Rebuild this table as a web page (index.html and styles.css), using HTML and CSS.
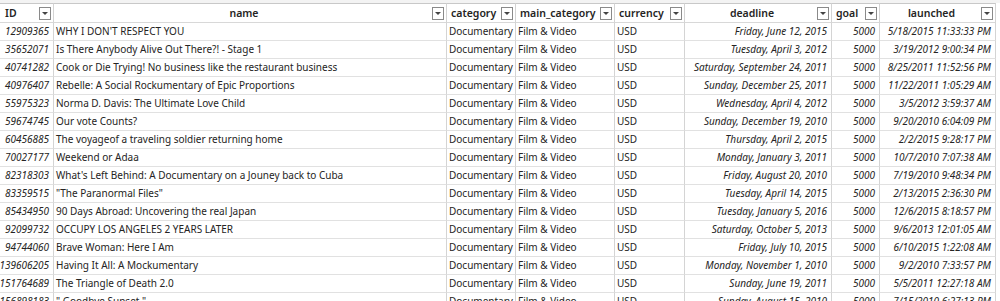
FILE: index.html
```html
<!DOCTYPE html>
<html>
<head>
<meta charset="utf-8">
<link rel="stylesheet" href="styles.css">
</head>
<body>
<div class="sheet">
  <div class="grid">
    <div class="h"><span class="hl">ID</span><span class="dd"></span></div>
    <div class="h"><span class="hl mid">name</span><span class="dd"></span></div>
    <div class="h"><span class="hl">category</span><span class="dd"></span></div>
    <div class="h"><span class="hl">main_category</span><span class="dd"></span></div>
    <div class="h"><span class="hl">currency</span><span class="dd"></span></div>
    <div class="h"><span class="hl mid">deadline</span><span class="dd"></span></div>
    <div class="h"><span class="hl">goal</span><span class="dd"></span></div>
    <div class="h"><span class="hl mid">launched</span><span class="dd"></span></div>

    <div class="c n"><span>12909365</span></div><div class="c">WHY I DON'T RESPECT YOU</div><div class="c">Documentary</div><div class="c">Film &amp; Video</div><div class="c">USD</div><div class="c n"><span>Friday, June 12, 2015</span></div><div class="c n"><span>5000</span></div><div class="c n"><span>5/18/2015 11:33:33 PM</span></div>
    <div class="c n"><span>35652071</span></div><div class="c">Is There Anybody Alive Out There?! - Stage 1</div><div class="c">Documentary</div><div class="c">Film &amp; Video</div><div class="c">USD</div><div class="c n"><span>Tuesday, April 3, 2012</span></div><div class="c n"><span>5000</span></div><div class="c n"><span>3/19/2012 9:00:34 PM</span></div>
    <div class="c n"><span>40741282</span></div><div class="c">Cook or Die Trying! No business like the restaurant business</div><div class="c">Documentary</div><div class="c">Film &amp; Video</div><div class="c">USD</div><div class="c n"><span>Saturday, September 24, 2011</span></div><div class="c n"><span>5000</span></div><div class="c n"><span>8/25/2011 11:52:56 PM</span></div>
    <div class="c n"><span>40976407</span></div><div class="c">Rebelle: A Social Rockumentary of Epic Proportions</div><div class="c">Documentary</div><div class="c">Film &amp; Video</div><div class="c">USD</div><div class="c n"><span>Sunday, December 25, 2011</span></div><div class="c n"><span>5000</span></div><div class="c n"><span>11/22/2011 1:05:29 AM</span></div>
    <div class="c n"><span>55975323</span></div><div class="c">Norma D. Davis: The Ultimate Love Child</div><div class="c">Documentary</div><div class="c">Film &amp; Video</div><div class="c">USD</div><div class="c n"><span>Wednesday, April 4, 2012</span></div><div class="c n"><span>5000</span></div><div class="c n"><span>3/5/2012 3:59:37 AM</span></div>
    <div class="c n"><span>59674745</span></div><div class="c">Our vote Counts?</div><div class="c">Documentary</div><div class="c">Film &amp; Video</div><div class="c">USD</div><div class="c n"><span>Sunday, December 19, 2010</span></div><div class="c n"><span>5000</span></div><div class="c n"><span>9/20/2010 6:04:09 PM</span></div>
    <div class="c n"><span>60456885</span></div><div class="c">The voyageof a traveling soldier returning home</div><div class="c">Documentary</div><div class="c">Film &amp; Video</div><div class="c">USD</div><div class="c n"><span>Thursday, April 2, 2015</span></div><div class="c n"><span>5000</span></div><div class="c n"><span>2/2/2015 9:28:17 PM</span></div>
    <div class="c n"><span>70027177</span></div><div class="c">Weekend or Adaa</div><div class="c">Documentary</div><div class="c">Film &amp; Video</div><div class="c">USD</div><div class="c n"><span>Monday, January 3, 2011</span></div><div class="c n"><span>5000</span></div><div class="c n"><span>10/7/2010 7:07:38 AM</span></div>
    <div class="c n"><span>82318303</span></div><div class="c">What's Left Behind: A Documentary on a Jouney back to Cuba</div><div class="c">Documentary</div><div class="c">Film &amp; Video</div><div class="c">USD</div><div class="c n"><span>Friday, August 20, 2010</span></div><div class="c n"><span>5000</span></div><div class="c n"><span>7/19/2010 9:48:34 PM</span></div>
    <div class="c n"><span>83359515</span></div><div class="c">"The Paranormal Files"</div><div class="c">Documentary</div><div class="c">Film &amp; Video</div><div class="c">USD</div><div class="c n"><span>Tuesday, April 14, 2015</span></div><div class="c n"><span>5000</span></div><div class="c n"><span>2/13/2015 2:36:30 PM</span></div>
    <div class="c n"><span>85434950</span></div><div class="c">90 Days Abroad: Uncovering the real Japan</div><div class="c">Documentary</div><div class="c">Film &amp; Video</div><div class="c">USD</div><div class="c n"><span>Tuesday, January 5, 2016</span></div><div class="c n"><span>5000</span></div><div class="c n"><span>12/6/2015 8:18:57 PM</span></div>
    <div class="c n"><span>92099732</span></div><div class="c">OCCUPY LOS ANGELES 2 YEARS LATER</div><div class="c">Documentary</div><div class="c">Film &amp; Video</div><div class="c">USD</div><div class="c n"><span>Saturday, October 5, 2013</span></div><div class="c n"><span>5000</span></div><div class="c n"><span>9/6/2013 12:01:05 AM</span></div>
    <div class="c n"><span>94744060</span></div><div class="c">Brave Woman: Here I Am</div><div class="c">Documentary</div><div class="c">Film &amp; Video</div><div class="c">USD</div><div class="c n"><span>Friday, July 10, 2015</span></div><div class="c n"><span>5000</span></div><div class="c n"><span>6/10/2015 1:22:08 AM</span></div>
    <div class="c n"><span>139606205</span></div><div class="c">Having It All: A Mockumentary</div><div class="c">Documentary</div><div class="c">Film &amp; Video</div><div class="c">USD</div><div class="c n"><span>Monday, November 1, 2010</span></div><div class="c n"><span>5000</span></div><div class="c n"><span>9/2/2010 7:33:57 PM</span></div>
    <div class="c n"><span>151764689</span></div><div class="c">The Triangle of Death 2.0</div><div class="c">Documentary</div><div class="c">Film &amp; Video</div><div class="c">USD</div><div class="c n"><span>Sunday, June 19, 2011</span></div><div class="c n"><span>5000</span></div><div class="c n"><span>5/5/2011 12:27:18 AM</span></div>
    <div class="c n"><span>156898183</span></div><div class="c">" Goodbye Sunset "</div><div class="c">Documentary</div><div class="c">Film &amp; Video</div><div class="c">USD</div><div class="c n"><span>Sunday, August 15, 2010</span></div><div class="c n"><span>5000</span></div><div class="c n"><span>7/15/2010 6:27:13 PM</span></div>
  </div>
</div>
</body>
</html>
```

FILE: styles.css
```css
html, body {
  margin: 0;
  padding: 0;
  background: #ffffff;
}
body {
  font-family: "Noto Sans", "Open Sans", sans-serif;
  font-size: 10px;
  color: #252423;
  overflow: hidden;
  height: 301px;
}
.sheet {
  padding-top: 3px;
  background: #f3f3f3;
}
.grid {
  display: grid;
  grid-template-columns: 54px 393px 69px 99px 70px 147px 48px 116px;
  grid-template-rows: 20px;
  grid-auto-rows: 18px;
  background: #ffffff;
}
.h {
  display: flex;
  align-items: center;
  box-sizing: border-box;
  border-top: 1px solid #c8c8c8;
  border-bottom: 1px solid #d8d8d8;
  border-right: 1px solid #d4d4d4;
  padding: 0 2px 0 4px;
  font-size: 10.5px;
  font-weight: 600;
  background: #ffffff;
  white-space: nowrap;
  overflow: hidden;
}
.h:first-child {
  padding-left: 5px;
}
.hl {
  flex: 1;
  text-align: left;
}
.hl.mid {
  text-align: center;
}
.dd {
  position: relative;
  flex: none;
  width: 12px;
  height: 13px;
  box-sizing: border-box;
  border: 1px solid #8a8a8a;
  background: #ffffff;
  margin-left: 2px;
}
.dd::after {
  content: "";
  position: absolute;
  left: 2px;
  top: 4px;
  border-left: 3px solid transparent;
  border-right: 3px solid transparent;
  border-top: 3px solid #444444;
}
.c {
  box-sizing: border-box;
  border-right: 1px solid #d4d4d4;
  border-bottom: 1px solid #e1e1e1;
  padding: 0 2px;
  line-height: 17px;
  white-space: nowrap;
  overflow: hidden;
}
.c.n {
  display: flex;
  justify-content: flex-end;
  font-style: italic;
  padding-right: 4px;
}
.c.n span {
  flex: none;
}
```
